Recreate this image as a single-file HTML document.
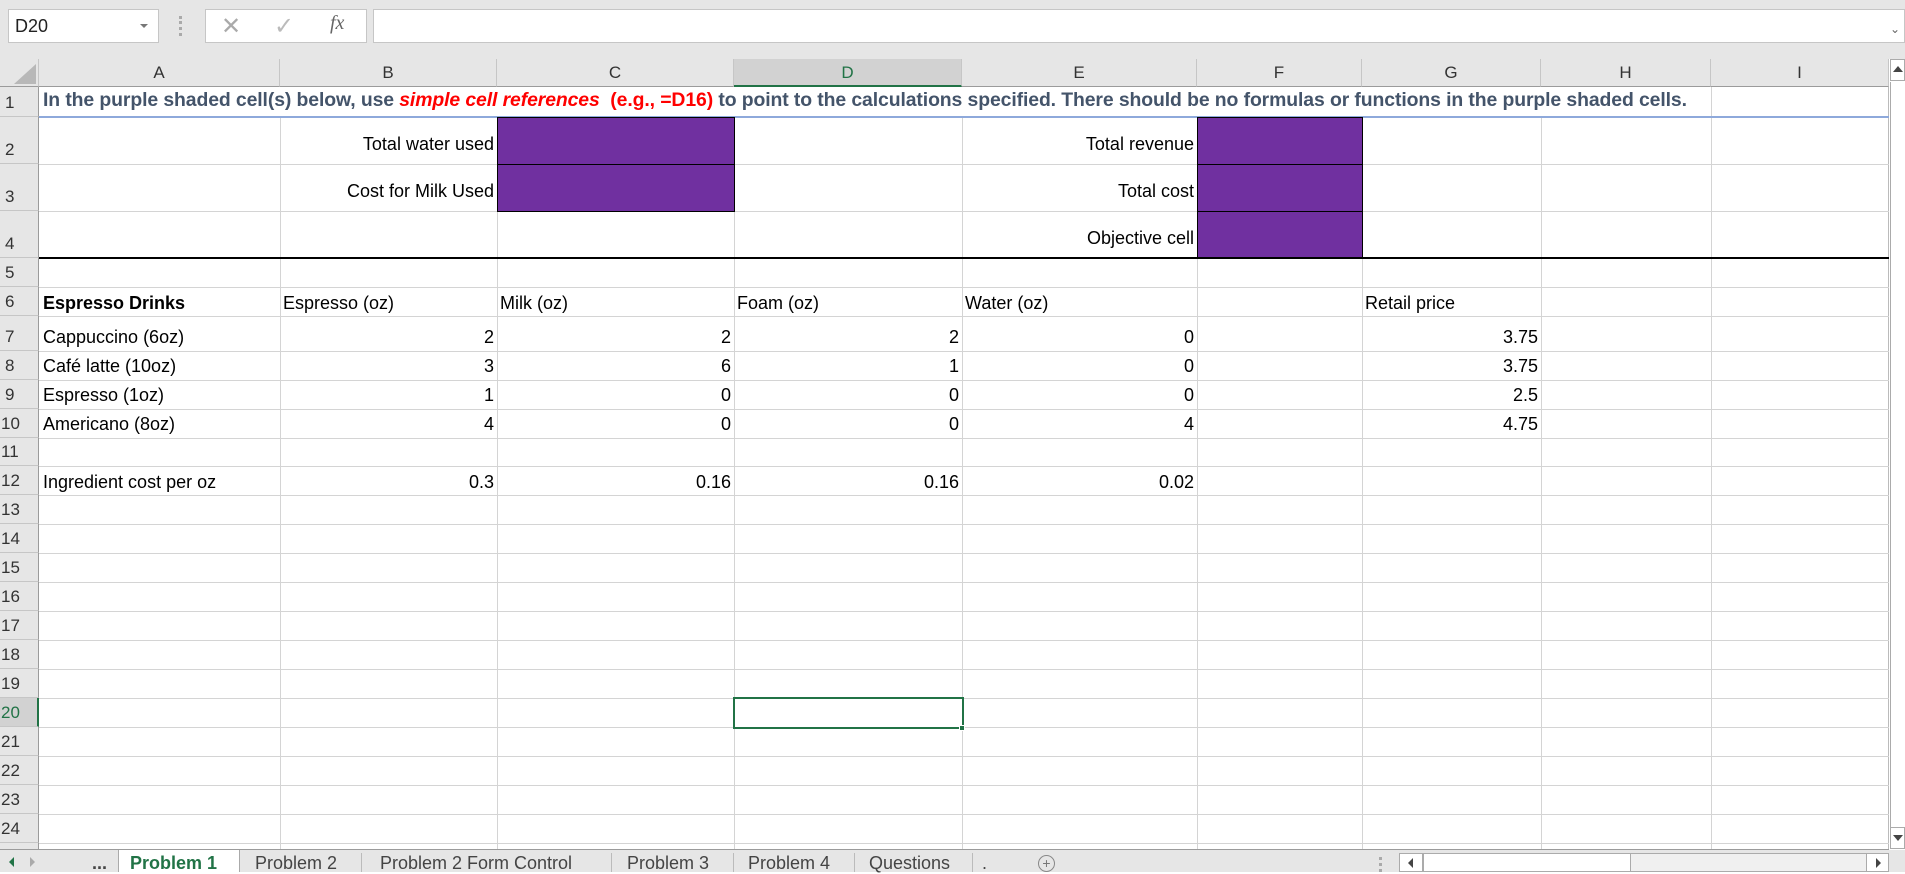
<!DOCTYPE html>
<html><head><meta charset="utf-8"><style>
*{margin:0;padding:0;box-sizing:border-box}
body{width:1905px;height:872px;overflow:hidden;background:#fff;position:relative;font-family:"Liberation Sans",Arial,sans-serif;font-size:18px;color:#000}
.a{position:absolute}
.v{position:absolute;width:1px;background:#d4d4d4}
.h{position:absolute;height:1px;background:#d4d4d4}
.ch{position:absolute;top:59px;height:28px;background:#e6e6e6;border-right:1px solid #c6c6c6;border-bottom:1px solid #9b9b9b;text-align:center;line-height:28px;font-size:17px;color:#333}
.rh{position:absolute;left:0;width:39px;background:#e6e6e6;border-bottom:1px solid #c6c6c6;border-right:1px solid #9b9b9b;font-size:17px;color:#333;padding-left:5px;display:flex;align-items:flex-end;padding-bottom:3px}
.t{position:absolute;white-space:nowrap;line-height:20px}
.r{text-align:right}
.p{position:absolute;background:#7030A0;border:1px solid #000}
.tab{position:absolute;top:853px;font-size:18px;color:#444;white-space:nowrap}
</style></head><body>
<div class="a" style="left:0;top:0;width:1905px;height:59px;background:#e6e6e6"></div>
<div class="a" style="left:8px;top:9px;width:151px;height:34px;background:#fff;border:1px solid #c6c6c6;font-size:18px;line-height:32px;padding-left:6px;color:#222">D20</div>
<div class="a" style="left:140px;top:24px;width:0;height:0;border-left:4px solid transparent;border-right:4px solid transparent;border-top:4px solid #777"></div>
<div class="a" style="left:179px;top:16px;width:3px;height:20px;border-left:3px dotted #aaa"></div>
<div class="a" style="left:205px;top:9px;width:162px;height:34px;background:#fff;border:1px solid #c6c6c6"></div>
<div class="a" style="left:221px;top:12px;font-size:24px;color:#aaa">✕</div>
<div class="a" style="left:274px;top:12px;font-size:24px;color:#bbb">✓</div>
<div class="a" style="left:330px;top:12px;font-size:20px;font-style:italic;font-family:'Liberation Serif',serif;color:#666">fx</div>
<div class="a" style="left:373px;top:9px;width:1532px;height:34px;background:#fff;border:1px solid #c6c6c6"></div>
<div class="a" style="left:1890px;top:22px;font-size:12px;color:#666">⌄</div>

<div class="a" style="left:0;top:59px;width:39px;height:28px;background:#e6e6e6;border-right:1px solid #c6c6c6;border-bottom:1px solid #9b9b9b"></div>
<div class="a" style="left:14px;top:64px;width:0;height:0;border-left:22px solid transparent;border-bottom:20px solid #b8b8b8"></div>
<div class="ch" style="left:39px;width:241px">A</div>
<div class="ch" style="left:280px;width:217px">B</div>
<div class="ch" style="left:497px;width:237px">C</div>
<div class="ch" style="left:734px;width:228px;background:#d2d2d2;border-bottom:2px solid #217346;color:#217346">D</div>
<div class="ch" style="left:962px;width:235px">E</div>
<div class="ch" style="left:1197px;width:165px">F</div>
<div class="ch" style="left:1362px;width:179px">G</div>
<div class="ch" style="left:1541px;width:170px">H</div>
<div class="ch" style="left:1711px;width:178px">I</div>

<div class="rh" style="top:87px;height:30px">1</div>
<div class="rh" style="top:117px;height:47px">2</div>
<div class="rh" style="top:164px;height:47px">3</div>
<div class="rh" style="top:211px;height:47px">4</div>
<div class="rh" style="top:258px;height:29px">5</div>
<div class="rh" style="top:287px;height:29px">6</div>
<div class="rh" style="top:316px;height:35px">7</div>
<div class="rh" style="top:351px;height:29px">8</div>
<div class="rh" style="top:380px;height:29px">9</div>
<div class="rh" style="top:409px;height:29px;padding-left:1px">10</div>
<div class="rh" style="top:438px;height:28px;padding-left:1px">11</div>
<div class="rh" style="top:466px;height:29px;padding-left:1px">12</div>
<div class="rh" style="top:495px;height:29px;padding-left:1px">13</div>
<div class="rh" style="top:524px;height:29px;padding-left:1px">14</div>
<div class="rh" style="top:553px;height:29px;padding-left:1px">15</div>
<div class="rh" style="top:582px;height:29px;padding-left:1px">16</div>
<div class="rh" style="top:611px;height:29px;padding-left:1px">17</div>
<div class="rh" style="top:640px;height:29px;padding-left:1px">18</div>
<div class="rh" style="top:669px;height:29px;padding-left:1px">19</div>
<div class="rh" style="top:698px;height:29px;padding-left:1px;background:#d2d2d2;border-right:2px solid #217346;color:#217346">20</div>
<div class="rh" style="top:727px;height:29px;padding-left:1px">21</div>
<div class="rh" style="top:756px;height:29px;padding-left:1px">22</div>
<div class="rh" style="top:785px;height:29px;padding-left:1px">23</div>
<div class="rh" style="top:814px;height:29px;padding-left:1px">24</div>
<div class="rh" style="top:843px;height:7px"></div>

<div class="v" style="left:280px;top:117px;height:733px"></div>
<div class="v" style="left:497px;top:117px;height:733px"></div>
<div class="v" style="left:734px;top:117px;height:733px"></div>
<div class="v" style="left:962px;top:117px;height:733px"></div>
<div class="v" style="left:1197px;top:117px;height:733px"></div>
<div class="v" style="left:1362px;top:117px;height:733px"></div>
<div class="v" style="left:1541px;top:117px;height:733px"></div>
<div class="v" style="left:1711px;top:87px;height:763px"></div>
<div class="v" style="left:1888px;top:87px;height:763px;background:#bbb"></div>
<div class="h" style="left:39px;width:1850px;top:164px"></div>
<div class="h" style="left:39px;width:1850px;top:211px"></div>
<div class="h" style="left:39px;width:1850px;top:287px"></div>
<div class="h" style="left:39px;width:1850px;top:316px"></div>
<div class="h" style="left:39px;width:1850px;top:351px"></div>
<div class="h" style="left:39px;width:1850px;top:380px"></div>
<div class="h" style="left:39px;width:1850px;top:409px"></div>
<div class="h" style="left:39px;width:1850px;top:438px"></div>
<div class="h" style="left:39px;width:1850px;top:466px"></div>
<div class="h" style="left:39px;width:1850px;top:495px"></div>
<div class="h" style="left:39px;width:1850px;top:524px"></div>
<div class="h" style="left:39px;width:1850px;top:553px"></div>
<div class="h" style="left:39px;width:1850px;top:582px"></div>
<div class="h" style="left:39px;width:1850px;top:611px"></div>
<div class="h" style="left:39px;width:1850px;top:640px"></div>
<div class="h" style="left:39px;width:1850px;top:669px"></div>
<div class="h" style="left:39px;width:1850px;top:698px"></div>
<div class="h" style="left:39px;width:1850px;top:727px"></div>
<div class="h" style="left:39px;width:1850px;top:756px"></div>
<div class="h" style="left:39px;width:1850px;top:785px"></div>
<div class="h" style="left:39px;width:1850px;top:814px"></div>
<div class="h" style="left:39px;width:1850px;top:843px"></div>
<div class="a" style="left:0;top:849px;width:1889px;height:1px;background:#9b9b9b"></div>
<div class="a" style="left:39px;top:116px;width:1850px;height:2px;background:#8EA9DB"></div>
<div class="a" style="left:39px;top:257px;width:1850px;height:2px;background:#000"></div>
<div class="p" style="left:497px;top:117px;width:238px;height:48px"></div>
<div class="p" style="left:497px;top:164px;width:238px;height:48px"></div>
<div class="p" style="left:1197px;top:117px;width:166px;height:48px"></div>
<div class="p" style="left:1197px;top:164px;width:166px;height:48px"></div>
<div class="p" style="left:1197px;top:211px;width:166px;height:47px"></div>

<div class="t" style="left:43px;top:90px;font-weight:bold;color:#44546A;font-size:19.4px;letter-spacing:-0.1px">In the purple shaded cell(s) below, use <span style="color:#FF0000;font-style:italic">simple cell references</span> <span style="color:#FF0000">&nbsp;(e.g., =D16)</span> to point to the calculations specified. There should be no formulas or functions in the purple shaded cells.</div>

<div class="t r" style="left:280px;width:214px;top:134px">Total water used</div>
<div class="t r" style="left:280px;width:214px;top:181px">Cost for Milk Used</div>
<div class="t r" style="left:962px;width:232px;top:134px">Total revenue</div>
<div class="t r" style="left:962px;width:232px;top:181px">Total cost</div>
<div class="t r" style="left:962px;width:232px;top:228px">Objective cell</div>

<div class="t" style="left:43px;top:293px;font-weight:bold">Espresso Drinks</div>
<div class="t" style="left:283px;top:293px">Espresso (oz)</div>
<div class="t" style="left:500px;top:293px">Milk (oz)</div>
<div class="t" style="left:737px;top:293px">Foam (oz)</div>
<div class="t" style="left:965px;top:293px">Water (oz)</div>
<div class="t" style="left:1365px;top:293px">Retail price</div>

<div class="t" style="left:43px;top:327px">Cappuccino (6oz)</div>
<div class="t" style="left:43px;top:356px">Café latte (10oz)</div>
<div class="t" style="left:43px;top:385px">Espresso (1oz)</div>
<div class="t" style="left:43px;top:414px">Americano (8oz)</div>
<div class="t" style="left:43px;top:472px">Ingredient cost per oz</div>

<div class="t r" style="left:280px;width:214px;top:327px">2</div>
<div class="t r" style="left:497px;width:234px;top:327px">2</div>
<div class="t r" style="left:734px;width:225px;top:327px">2</div>
<div class="t r" style="left:962px;width:232px;top:327px">0</div>
<div class="t r" style="left:1362px;width:176px;top:327px">3.75</div>

<div class="t r" style="left:280px;width:214px;top:356px">3</div>
<div class="t r" style="left:497px;width:234px;top:356px">6</div>
<div class="t r" style="left:734px;width:225px;top:356px">1</div>
<div class="t r" style="left:962px;width:232px;top:356px">0</div>
<div class="t r" style="left:1362px;width:176px;top:356px">3.75</div>

<div class="t r" style="left:280px;width:214px;top:385px">1</div>
<div class="t r" style="left:497px;width:234px;top:385px">0</div>
<div class="t r" style="left:734px;width:225px;top:385px">0</div>
<div class="t r" style="left:962px;width:232px;top:385px">0</div>
<div class="t r" style="left:1362px;width:176px;top:385px">2.5</div>

<div class="t r" style="left:280px;width:214px;top:414px">4</div>
<div class="t r" style="left:497px;width:234px;top:414px">0</div>
<div class="t r" style="left:734px;width:225px;top:414px">0</div>
<div class="t r" style="left:962px;width:232px;top:414px">4</div>
<div class="t r" style="left:1362px;width:176px;top:414px">4.75</div>

<div class="t r" style="left:280px;width:214px;top:472px">0.3</div>
<div class="t r" style="left:497px;width:234px;top:472px">0.16</div>
<div class="t r" style="left:734px;width:225px;top:472px">0.16</div>
<div class="t r" style="left:962px;width:232px;top:472px">0.02</div>

<div class="a" style="left:733px;top:697px;width:231px;height:32px;border:2px solid #217346"></div>
<div class="a" style="left:959px;top:725px;width:6px;height:6px;background:#217346;border:1px solid #fff"></div>

<div class="a" style="left:1889px;top:59px;width:16px;height:791px;background:#fff"></div>
<div class="a" style="left:1890px;top:59px;width:15px;height:22px;background:#fff;border:1px solid #ababab"></div>
<div class="a" style="left:1893px;top:66px;width:0;height:0;border-left:5px solid transparent;border-right:5px solid transparent;border-bottom:6px solid #444"></div>
<div class="a" style="left:1890px;top:82px;width:15px;height:745px;background:#fff;border-left:1px solid #ababab"></div>
<div class="a" style="left:1890px;top:827px;width:15px;height:22px;background:#fff;border:1px solid #ababab"></div>
<div class="a" style="left:1893px;top:835px;width:0;height:0;border-left:5px solid transparent;border-right:5px solid transparent;border-top:6px solid #444"></div>

<div class="a" style="left:0;top:850px;width:1905px;height:22px;background:#e6e6e6"></div>
<div class="a" style="left:9px;top:857px;width:0;height:0;border-top:5px solid transparent;border-bottom:5px solid transparent;border-right:5px solid #217346"></div>
<div class="a" style="left:30px;top:857px;width:0;height:0;border-top:5px solid transparent;border-bottom:5px solid transparent;border-left:5px solid #aaa"></div>
<div class="tab" style="left:92px;top:853px;color:#444;font-weight:bold">...</div>
<div class="a" style="left:118px;top:850px;width:122px;height:22px;background:#fff;border-left:1px solid #aaa;border-right:1px solid #aaa"></div>
<div class="tab" style="left:130px;color:#217346;font-weight:bold">Problem 1</div>
<div class="tab" style="left:255px">Problem 2</div>
<div class="a" style="left:361px;top:853px;width:1px;height:19px;background:#bbb"></div>
<div class="tab" style="left:380px">Problem 2 Form Control</div>
<div class="a" style="left:611px;top:853px;width:1px;height:19px;background:#bbb"></div>
<div class="tab" style="left:627px">Problem 3</div>
<div class="a" style="left:733px;top:853px;width:1px;height:19px;background:#bbb"></div>
<div class="tab" style="left:748px">Problem 4</div>
<div class="a" style="left:854px;top:853px;width:1px;height:19px;background:#bbb"></div>
<div class="tab" style="left:869px">Questions</div>
<div class="a" style="left:972px;top:853px;width:1px;height:19px;background:#bbb"></div>
<div class="tab" style="left:982px">.</div>
<div class="a" style="left:1038px;top:855px;width:17px;height:17px;border:1px solid #888;border-radius:50%;font-size:14px;line-height:15px;text-align:center;color:#777">+</div>
<div class="a" style="left:1379px;top:857px;width:3px;height:15px;border-left:3px dotted #aaa"></div>
<div class="a" style="left:1399px;top:853px;width:490px;height:19px;background:#f0f0f0;border:1px solid #ababab"></div>
<div class="a" style="left:1399px;top:853px;width:24px;height:19px;background:#fff;border:1px solid #ababab"></div>
<div class="a" style="left:1408px;top:858px;width:0;height:0;border-top:5px solid transparent;border-bottom:5px solid transparent;border-right:5px solid #444"></div>
<div class="a" style="left:1423px;top:853px;width:208px;height:19px;background:#fff;border:1px solid #ababab"></div>
<div class="a" style="left:1866px;top:853px;width:23px;height:19px;background:#fff;border:1px solid #ababab"></div>
<div class="a" style="left:1876px;top:858px;width:0;height:0;border-top:5px solid transparent;border-bottom:5px solid transparent;border-left:5px solid #444"></div>
</body></html>
